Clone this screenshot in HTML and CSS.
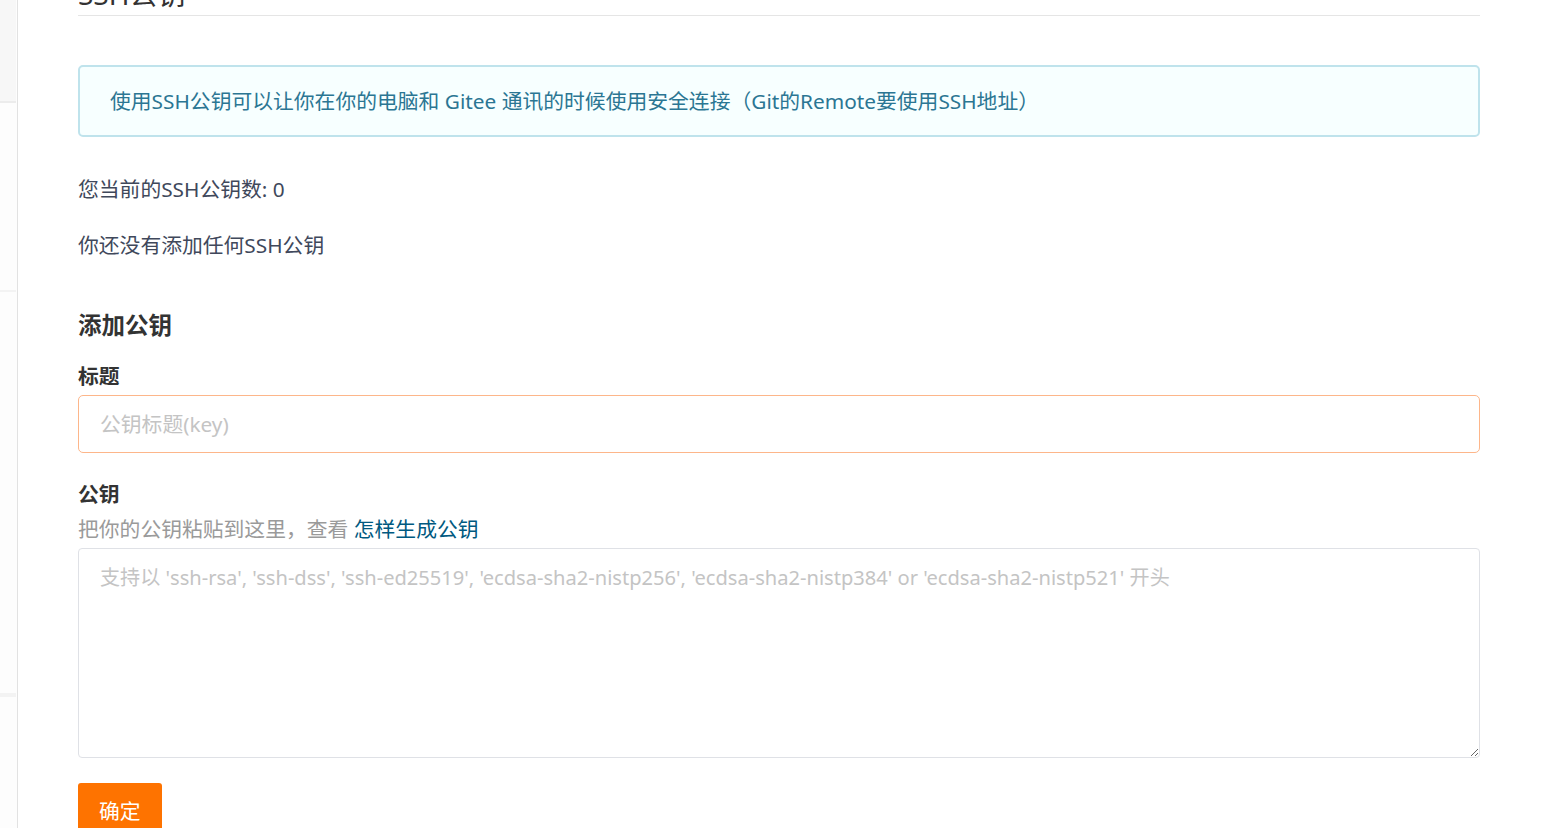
FILE: index.html
```html
<!DOCTYPE html>
<html lang="zh-CN">

<head>
    <meta charset="UTF-8">
    <meta name="viewport" content="width=device-width, initial-scale=1.0">
    <title>SSH公钥 - Gitee</title>
    <link rel="stylesheet" href="styles.css">
</head>

<body>
    <div class="layout">
        <div class="sidebar">
            <div class="side_block side_top"></div>
            <div class="side_block side_mid"></div>
            <div class="side_block side_low"></div>
            <div class="side_block"></div>
        </div>
        <div class="content">
            <h2 class="page_title">SSH公钥</h2>

            <div class="info_box">
                使用SSH公钥可以让你在你的电脑和 Gitee 通讯的时候使用安全连接（Git的Remote要使用SSH地址）
            </div>

            <p class="count">您当前的SSH公钥数: 0</p>
            <p class="empty">你还没有添加任何SSH公钥</p>

            <h3 class="add_title">添加公钥</h3>
            <form class="key_form">
                <label class="field_label" for="key_title">标题</label>
                <input class="field_input" id="key_title" type="text" placeholder="公钥标题(key)" autofocus>

                <label class="field_label label_key" for="key_body">公钥</label>
                <div class="field_hint">把你的公钥粘贴到这里，查看 <a href="#">怎样生成公钥</a></div>
                <textarea class="field_area" id="key_body" placeholder="支持以 'ssh-rsa', 'ssh-dss', 'ssh-ed25519', 'ecdsa-sha2-nistp256', 'ecdsa-sha2-nistp384' or 'ecdsa-sha2-nistp521' 开头"></textarea>

                <button class="btn_submit" type="button">确定</button>
            </form>
        </div>
    </div>
</body>

</html>
```

FILE: styles.css
```css
* {
    box-sizing: border-box;
}

html, body {
    margin: 0;
    height: 100%;
    overflow: hidden;
}

body {
    background: #fff;
    color: #40485b;
    font-family: "Noto Sans", "Noto Sans CJK SC", sans-serif;
    font-size: 20.8px;
    line-height: 28px;
}

.layout {
    display: flex;
    min-height: 100vh;
}

.sidebar {
    width: 18px;
    flex-shrink: 0;
    border-right: 1px solid #e2e2e2;
    background: #fdfdfd;
}

.side_block {
    width: 16px;
    border-bottom: 2px solid #f3f3f3;
}

.side_top {
    height: 103px;
    background: #f7f7f7;
    border-bottom-color: #ececec;
}

.side_mid {
    height: 189px;
}

.side_low {
    height: 403px;
}

.content {
    flex: 1;
    padding: 0 61px 0 60px;
}

.page_title {
    margin: -24px 0 0;
    padding-bottom: 3px;
    font-size: 28px;
    line-height: 36px;
    font-weight: normal;
    color: #333;
    border-bottom: 1px solid #e5e5e5;
}

.info_box {
    margin-top: 49px;
    padding: 20px 30px;
    border: 2px solid #bfe3ec;
    border-radius: 5px;
    background: #f7ffff;
    color: #2b7693;
}

.count {
    margin: 38px 0 0;
}

.empty {
    margin: 28px 0 0;
}

.add_title {
    margin: 51px 0 0;
    font-size: 23.5px;
    line-height: 30px;
    font-weight: bold;
    color: #333;
}

.key_form {
    display: flex;
    flex-direction: column;
    margin-top: 22px;
}

.field_label {
    font-weight: bold;
    color: #333;
}

.field_input {
    margin-top: 5px;
    height: 58px;
    padding: 0 21px;
    border: 1px solid #fdb68a;
    border-radius: 5px;
    font: inherit;
    color: #40485b;
    outline: none;
}

.label_key {
    margin-top: 27px;
}

.field_hint {
    margin-top: 7px;
    color: #9a9a9a;
}

.field_hint a {
    color: #005980;
    text-decoration: none;
}

.field_area {
    margin-top: 5px;
    height: 210px;
    padding: 15px 21px;
    border: 1px solid #dfe1e6;
    border-radius: 4px;
    font: inherit;
    font-size: 20.1px;
    resize: vertical;
    outline: none;
}

.field_input::placeholder,
.field_area::placeholder {
    color: #c4c4c4;
}

.btn_submit {
    align-self: flex-start;
    margin-top: 25px;
    height: 56px;
    padding: 0 21px;
    border: none;
    border-radius: 3px;
    background: #fe7300;
    color: #fff;
    font: inherit;
    cursor: pointer;
}
```
